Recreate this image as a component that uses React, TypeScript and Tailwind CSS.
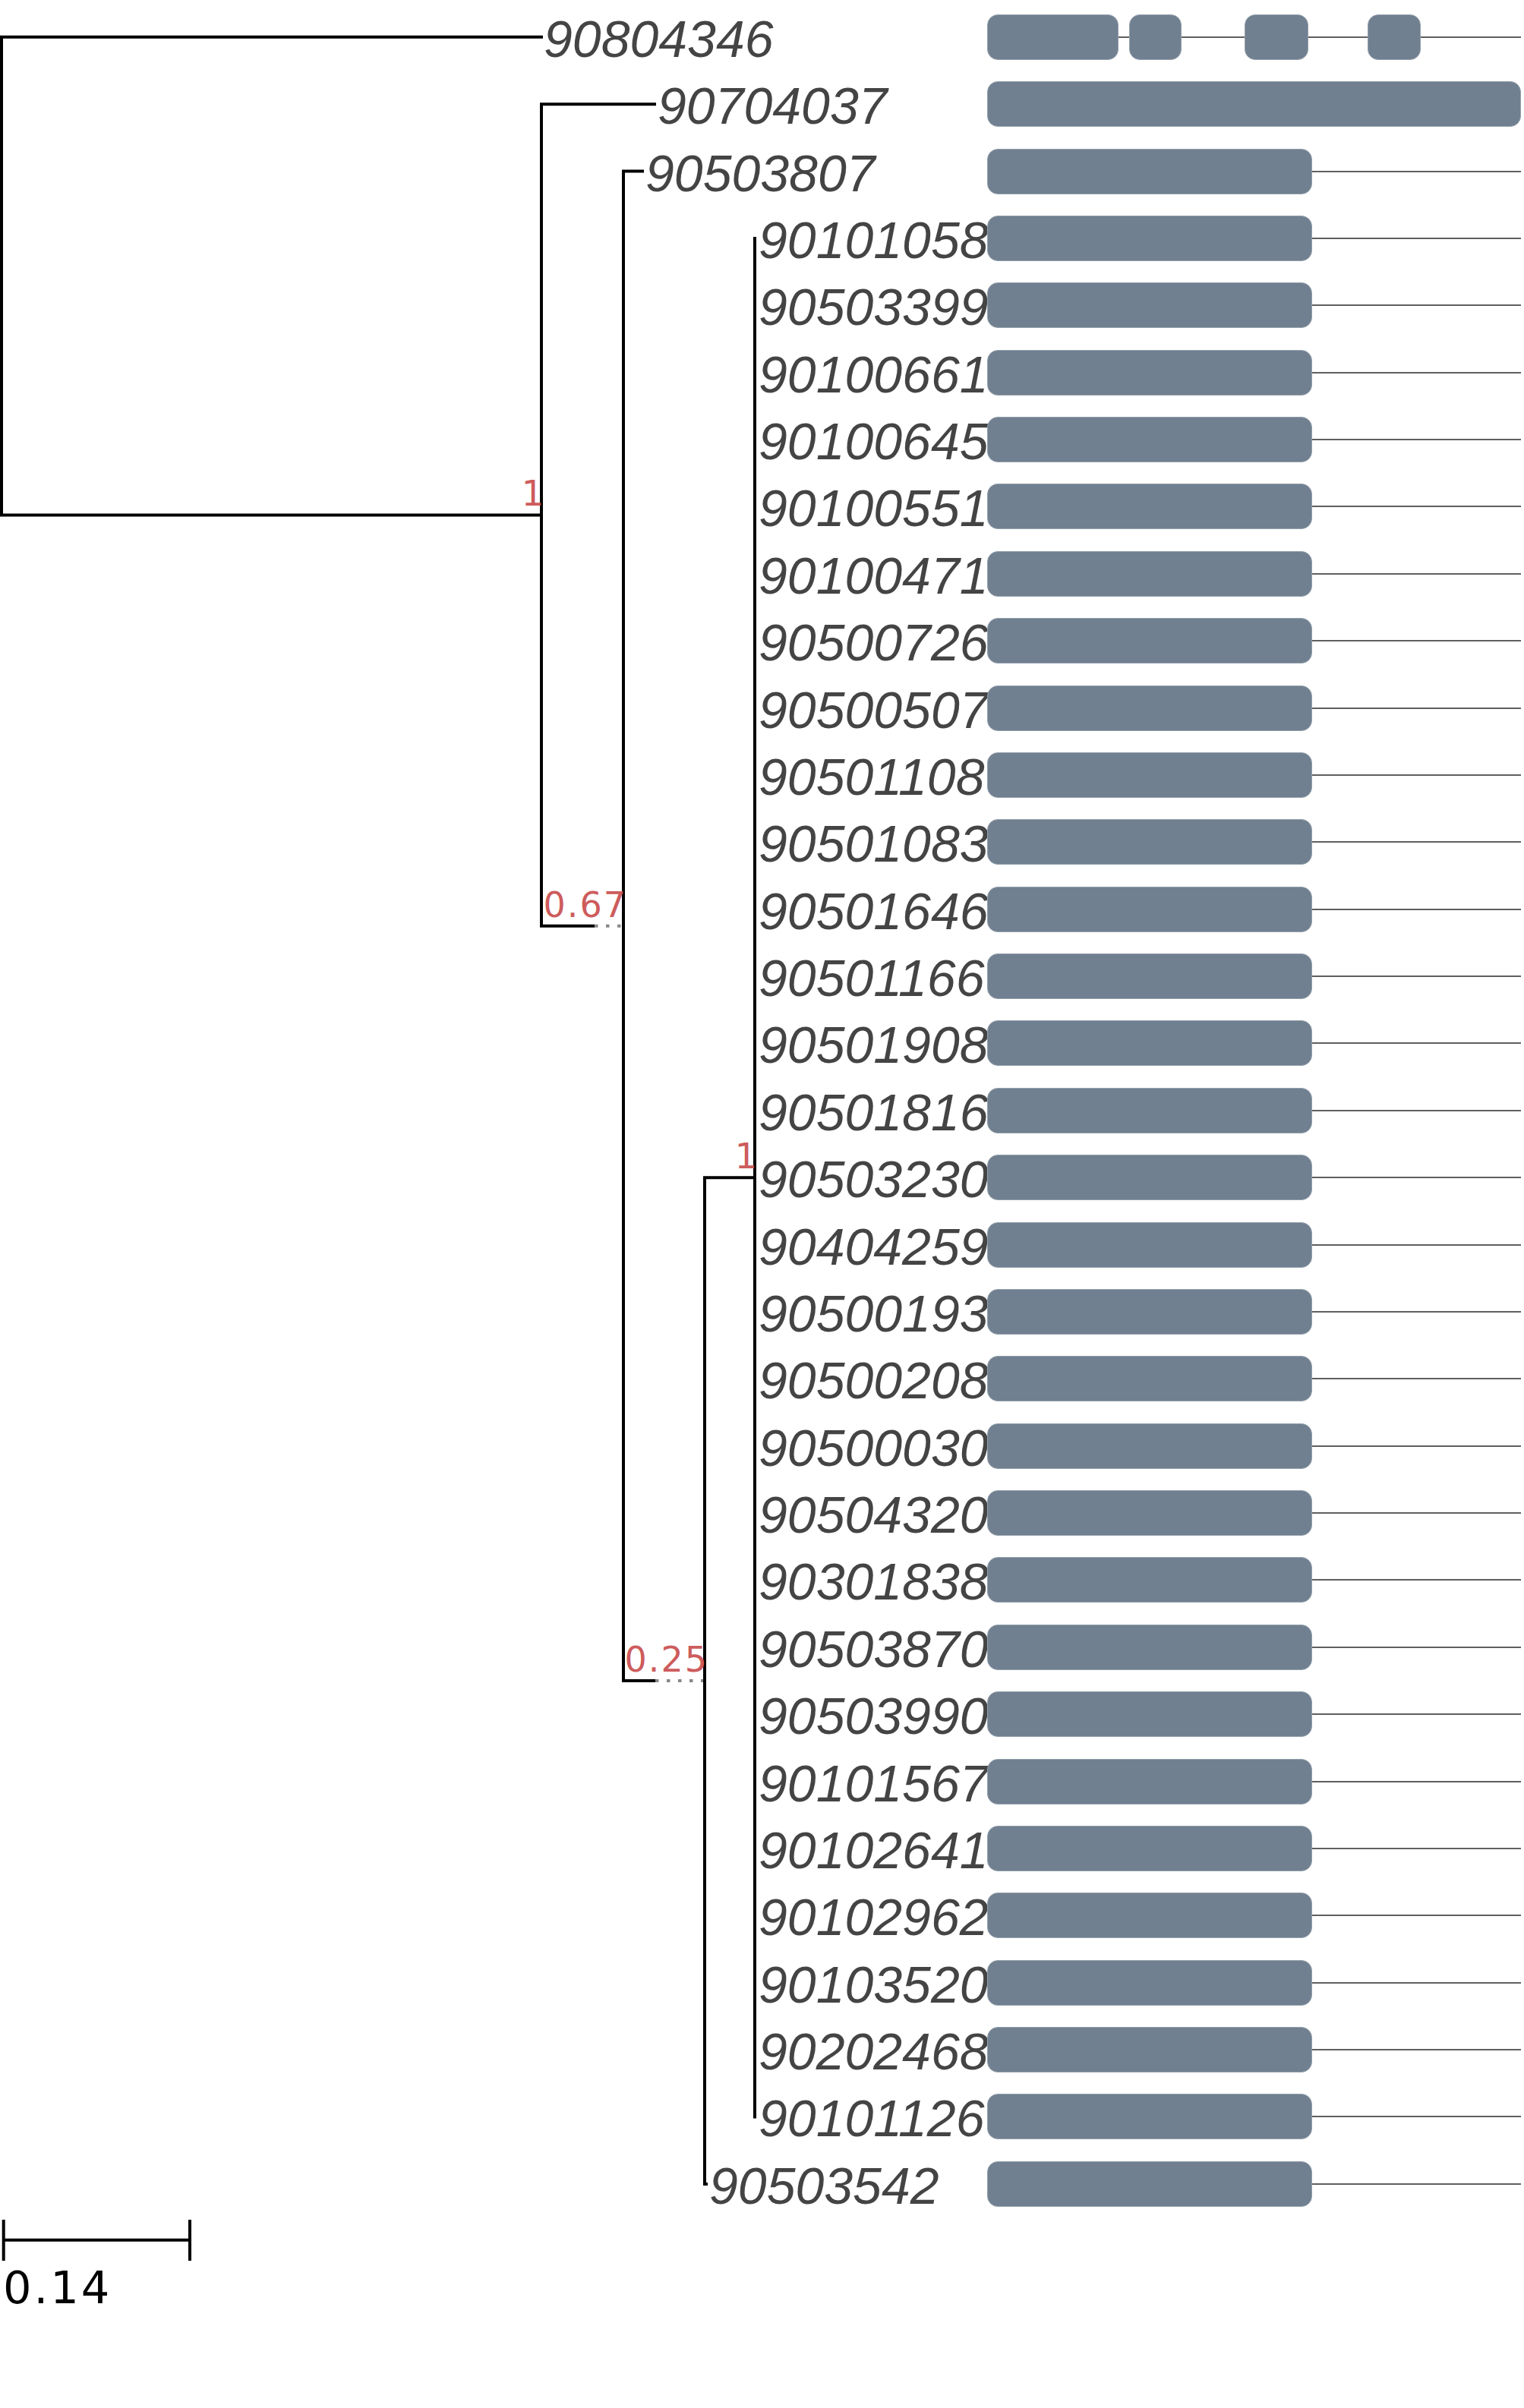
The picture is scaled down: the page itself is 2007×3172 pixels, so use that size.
import React from "react";

// Tree geometry (px). Leaves sit on a fixed row grid.
const ROW_H = 88.38;
const ROW_TOP = 48.8;
const rowY = (i: number) => ROW_TOP + ROW_H * i;

const GENE_W = 703;

type Leaf = { name: string; x: number; exons: [number, number][] };

const SHORT: [number, number][] = [[0, 428.3]];

const innerNames = [
  "90101058", "90503399", "90100661", "90100645", "90100551", "90100471",
  "90500726", "90500507", "90501108", "90501083", "90501646", "90501166",
  "90501908", "90501816", "90503230", "90404259", "90500193", "90500208",
  "90500030", "90504320", "90301838", "90503870", "90503990", "90101567",
  "90102641", "90102962", "90103520", "90202468", "90101126",
];

const leaves: Leaf[] = [
  { name: "90804346", x: 716, exons: [[0, 172.7], [186.7, 256], [339, 423.3], [501, 570.7]] },
  { name: "90704037", x: 866, exons: [[0, GENE_W]] },
  { name: "90503807", x: 850, exons: SHORT },
  ...innerNames.map((name) => ({ name, x: 999, exons: SHORT })),
  { name: "90503542", x: 934, exons: SHORT },
];

// internal nodes
const yA = (rowY(1) + 1219.8) / 2;
const yB = 1219.8;
const yC = 2214;
const yD = (rowY(3) + rowY(31)) / 2;

const supports = [
  { label: "1", x: 713, y: yA },
  { label: "0.67", x: 821, y: yB },
  { label: "1", x: 994, y: yD },
  { label: "0.25", x: 928, y: yC },
];

const treePath = [
  `M2 ${rowY(0) - 2} V${yA + 2}`,
  `M0 ${rowY(0)} H715`,
  `M0 ${yA} H715`,
  `M713 ${rowY(1) - 2} V${yB + 2}`,
  `M711 ${rowY(1)} H864`,
  `M711 ${yB} H783`,
  `M821 ${rowY(2) - 2} V${yC + 2}`,
  `M819 ${rowY(2)} H848`,
  `M819 ${yC} H863`,
  `M928 ${yD - 2} V${rowY(32) + 2}`,
  `M926 ${yD} H994`,
  `M994 ${rowY(3) - 2} V${rowY(31) + 2}`,
  `M926 ${rowY(32)} H932`,
].join(" ");

const dottedPath = `M783 ${yB} H819 M863 ${yC} H926`;

function GeneModel({ exons }: { exons: [number, number][] }) {
  let prev = 0;
  return (
    <div className="relative flex h-[60px] w-[703px] shrink-0">
      {/* intron line behind exons */}
      <div className="absolute inset-x-0 top-[29px] h-[2px] bg-[#5f5f5f]" />
      {exons.map(([s, e], i) => {
        const gap = s - prev;
        prev = e;
        return (
          <div
            key={i}
            className="relative h-full shrink-0 rounded-[14px] border border-[#94a0ac] bg-[#708090]"
            style={{ marginLeft: gap, width: e - s }}
          />
        );
      })}
    </div>
  );
}

export default function App() {
  return (
    <div className="relative h-[3172px] w-[2007px] overflow-hidden bg-white">
      {/* branches */}
      <svg className="pointer-events-none absolute left-0 top-0" width={1010} height={2900}>
        <path d={treePath} stroke="#000" strokeWidth={4} fill="none" />
        <path d={dottedPath} stroke="#888" strokeWidth={4} strokeDasharray="4.5 10.5" fill="none" />
      </svg>

      {/* support values, right edge on the node */}
      {supports.map((s, i) => (
        <span
          key={i}
          className="absolute -translate-x-full whitespace-nowrap font-['DejaVu_Sans',sans-serif] text-[46px] leading-none tracking-[2px] text-[#cd5c5c]"
          style={{ left: s.x + 5, top: s.y - 12 - 39 }}
        >
          {s.label}
        </span>
      ))}

      {/* leaf rows */}
      <div className="relative flex flex-col pt-[4.6px]">
        {leaves.map((leaf) => (
          <div key={leaf.name} className="flex h-[88.38px] items-center">
            <div className="w-[1300px] shrink-0">
              <span
                className="block translate-y-[2px] whitespace-nowrap font-['Liberation_Sans',Arial,sans-serif] text-[68px] italic leading-none text-[#444]"
                style={{ marginLeft: leaf.x }}
              >
                {leaf.name}
              </span>
            </div>
            <GeneModel exons={leaf.exons} />
          </div>
        ))}
      </div>

      {/* scale bar */}
      <div className="relative mt-[3px] flex flex-col">
        <svg width={260} height={54}>
          <path d="M4.7 26.7 H250 M4.7 0 V54 M250 0 V54" stroke="#000" strokeWidth={4} fill="none" />
        </svg>
        <span className="ml-[4px] mt-[6px] font-['DejaVu_Sans',sans-serif] text-[59px] leading-none tracking-[3px] text-black">
          0.14
        </span>
      </div>
    </div>
  );
}
